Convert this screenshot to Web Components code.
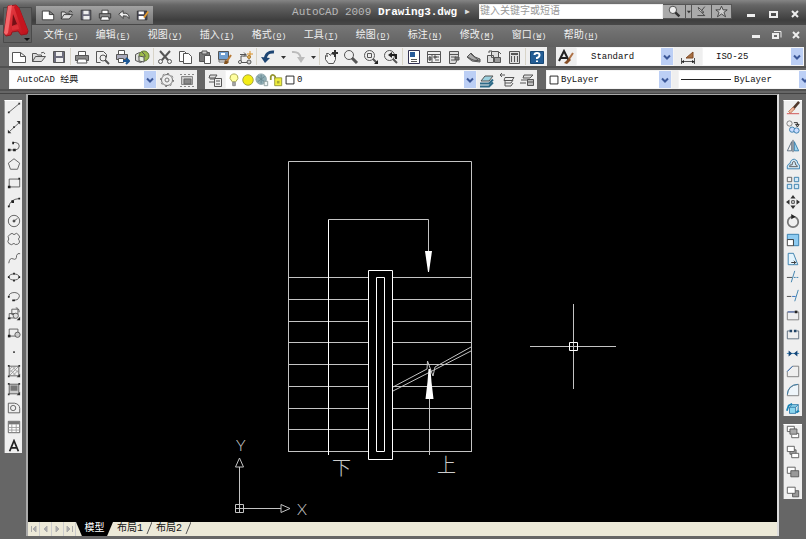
<!DOCTYPE html>
<html lang="zh-CN">
<head>
<meta charset="utf-8">
<title>AutoCAD 2009 Drawing3.dwg</title>
<style>
    html, body {
        margin: 0;
        height: 100%;
        background: #666;
        overflow: hidden;
    }
</style>
</head>
<body>
<cad-app></cad-app>

<script>
// 16x16 icons, drawn with the current colour unless they set their own
const ICONS = {
    new: '<path d="M1.500 3.500h8l5 4v6h-13z M9.500 3.500v4h5" fill="#fff"/>',
    open: '<path d="M1.500 12.500v-8h4l1 1.500h4v2 M1.500 12.500l3-5h10l-4 5z" fill="#ddd"/><path d="M10 4q3-2 4 1"/>',
    save: '<path d="M2.500 2.500h11v11h-11z" fill="#6c6c7c"/><path d="M5 3h6v4h-6z M5 9h7v4h-7z" fill="#eee" stroke="none"/>',
    print: '<path d="M4.500 6.500v-4h7v4" fill="#fff"/><path d="M1.500 6.500h13v5h-13z" fill="#888"/><path d="M4 10h8l1 4h-10z" fill="#fff"/>',
    undoS: '<path d="M2 7l5-4v3q7-1 7 6q-3-4-7-3v3z" fill="#eee"/>',
    saveAs: '<path d="M1.500 3.500h11v10h-11z" fill="#445"/><path d="M3 9h7v4h-7z M3 4h6v3h-6z" fill="#fff" stroke="none"/><path d="M14 4l-5 7" stroke="#e0982c" stroke-width="2"/>',
    preview: '<path d="M2.500 13.500v-11h7l3 3v3 M2.500 13.500h4" fill="none"/><circle cx="9" cy="9" r="3"/><path d="M11 11l4 4" stroke-width="2"/>',
    plot: '<path d="M4.500 5.500v-4h6v4" fill="#fff"/><path d="M2.500 5.500h11v5h-11z" fill="#aab"/><path d="M4.500 9.500h5v4h-5z" fill="#fff"/><path d="M9 12h5m-2-3l3 3l-3 3" stroke="#1a5593" stroke-width="2"/>',
    publish: '<path d="M1.500 5.500l4-2l5 2v6l-4 2l-5-2z" fill="#ddd"/><circle cx="10" cy="7" r="5" fill="#9cb94a" stroke="#627a35"/><path d="M5 7l5 1v5l-5-1z" fill="#e6eedc"/><path d="M8 3q4 3 3 5"/>',
    cut: '<path d="M3 2l8 9M13 2l-8 9" stroke-width="2"/><circle cx="3.500" cy="12.500" r="2"/><circle cx="12.500" cy="12.500" r="2"/>',
    copy: '<path d="M2.500 2.500h5l2 2v8h-7z" fill="#fff"/><path d="M6.500 4.500h5l3 3v7h-8z" fill="#fff"/>',
    paste: '<path d="M2.500 3.500h10v9h-10z" fill="#777"/><path d="M5 2h5v3h-5z" fill="#ccc"/><path d="M7.500 6.500h6v8h-6z" fill="#fff"/>',
    match: '<path d="M1.500 2.500h10v8h-10z" fill="#6f9ed0"/><path d="M2 11h9v2h-9z" fill="#fff" stroke="#777"/><path d="M4 5h4" stroke="#fff" stroke-width="2"/><path d="M14 6l-4 6" stroke="#b87935" stroke-width="2"/><path d="M8 11l4 2l-2 2h-3z" fill="#85531e" stroke="none"/>',
    block: '<path d="M4 13V7h6" /><path d="M3 5.500h6l-2-2m2 2l-2 2"/><path d="M2 13.500h9"/><circle cx="3" cy="13" r="1.500" fill="#fff"/><circle cx="12" cy="13" r="2" fill="#ccc"/><path d="M13 2v6M10 5h6" stroke="#d99026"/><circle cx="12" cy="8" r="1.500" fill="#e5b45e" stroke="#a8782c"/>',
    undo: '<path d="M14 3Q6 2 5 11" stroke="#1d4573" stroke-width="3"/><path d="M1 8l4 6l5-5z" fill="#1d4573" stroke="none"/>',
    redo: '<path d="M2 3q8-1 9 7" stroke="#bbb" stroke-width="2"/><path d="M7 8l4 6l4-6z" fill="#bbb" stroke="none"/>',
    pan: '<path d="M2.500 6.500l2 1l-1-3h2l2 2l1-2l4 2v4l-2 4h-5l-3-4z" fill="#f4f4f4"/><path d="M12 1v7M9 4h6" stroke="#333" stroke-width="2"/>',
    zoom: '<circle cx="6" cy="6" r="4.500" fill="#eee"/><path d="M9 9l5 5" stroke-width="3"/>',
    zoomWin: '<circle cx="6.500" cy="6.500" r="5" fill="#eee"/><path d="M4.500 4.500h4v4h-4z"/><path d="M10 10l4 4" stroke-width="2"/><path d="M11 15h4v-4z" fill="#222" stroke="none"/>',
    zoomPrev: '<circle cx="6.500" cy="6.500" r="5" fill="#eee"/><path d="M10 10l4 4" stroke-width="2"/><path d="M13 10V6H8" stroke="#222" stroke-width="2"/><path d="M9 3v6l-4-3z" fill="#222" stroke="none"/>',
    props: '<path d="M2.500 1.500h11v13h-11z" fill="#fff" stroke="#335"/><path d="M4 3h5v5h-5z" fill="#285b9b" stroke="none"/><path d="M5 10.500h6M5 12.500h6"/>',
    design: '<path d="M1.500 2.500h13v11h-13z M1.500 5.500h13M6 6v7M9 8h4M9 11h4M3 8h1M3 11h1"/><path d="M3 8h2v3h-2z M8 7h2v2h-2z" fill="#888"/>',
    palette: '<path d="M3.500 2.500h9v5l-3 7h-6z M3.500 5.500h9M5 8h5M5 11h4" fill="#ddd"/><path d="M9 8h4v3h-4z" fill="#777"/>',
    sheet: '<path d="M1 8l4-4l4 4l5 2v3l-8-1z" fill="#aaa"/><path d="M2 8q6 5 12 3M5 5l7 6"/>',
    markup: '<path d="M5.500 2.500h7v6h-7z M1.500 6.500h6v7h-6z" fill="#ddd"/><path d="M8.500 8.500h6v5h-6z" fill="#999"/><path d="M3 4v-2h3M13 3l2 2"/>',
    calc: '<path d="M3.500 2.500h10v12h-10z" fill="#ddd"/><path d="M5 5h7M5 8h1m2 0h1m2 0h1M5 10h1m2 0h1m2 0h1M5 12h1m2 0h1m2 0h1" stroke-width="2"/>',
    help: '<path d="M1.500 2.500h13v12h-13z" fill="#235d95" stroke="#174775"/><path d="M5.500 6q0-2 2.500-2t2.500 2t-2.500 3v1M8 11.500v1.500" stroke="#fff" stroke-width="2"/>',
    textStyle: '<path d="M1 12L6 2L11 12M3 9h6" stroke="#222" stroke-width="2"/><path d="M15 4l-4 6" stroke="#ae7145" stroke-width="2"/><path d="M11 9l2 2l-4 4l-3-1z" fill="#854d25" stroke="none"/>',
    dimStyle: '<path d="M1.500 9v6M14.500 9v6M2 12.500h12"/><path d="M1 13l3-2v3z M15 13l-3-2v3z" fill="#222" stroke="none"/><path d="M13 3l-7 6h7z" fill="#a87042" stroke="#804b25"/>',
    gear: '<circle cx="8" cy="8" r="5.500" stroke="#777"/><circle cx="8" cy="8" r="6.500" stroke="#777" stroke-dasharray="2 3"/><circle cx="8" cy="8" r="2" stroke="#777"/>',
    saveWs: '<path d="M2.500 4.500h11v8h-11z" stroke="#888" fill="#ccc"/><path d="M5 7h7v5h-7z" fill="#888" stroke="#666"/><path d="M1 2.500h14M1 14.500h14" stroke="#888" stroke-dasharray="2 2"/>',
    layers: '<path d="M3 3h7l-2 3h-6z M3 7h5M2 10h5" fill="#ddd"/><path d="M7.500 6.500h7v8h-7z" fill="#eee"/><path d="M9 9h4M9 12h4"/>',
    bulb: '<path d="M6 10q-4-4-2-7q4-4 8 0q2 3-2 7z" fill="#ffffa0" stroke="#a0a044"/><path d="M6.500 10.500h3v4h-3z" fill="#aaa" stroke="#888"/>',
    sun: '<circle cx="8" cy="8" r="6" fill="#f4ed16" stroke="#999a3e"/>',
    freeze: '<circle cx="7" cy="7" r="6" fill="#8faeb5" stroke="#8aa3aa"/><path d="M3 4l8 6M7 2v10M3 10l8-6" stroke="#66858f"/><path d="M10.500 9.500h4v5h-4z" fill="#edf4f4" stroke="#899"/>',
    lock: '<path d="M2 8V4q2-4 5 0v3" stroke="#93932f" stroke-width="2"/><path d="M6.500 5.500h8v9h-8z" fill="#f0ef3d" stroke="#8f9034"/><path d="M9 9h3v3h-3z" fill="#aaa932" stroke="none"/>',
    square: '<path d="M3.500 3.500h9v9h-9z" fill="#fff" stroke="#111"/>',
    layerCur: '<path d="M2 9h8l4-5h-8z" fill="#9cd1df"/><path d="M1 11.500h9l4-4M1 14.500h9l4-4" stroke="#2d6a87" stroke-width="2"/>',
    layerPrev: '<path d="M6 5.500h9l-2 3h-8z M6 8v3h6l2-3 M6 11v3h6l2-3" fill="#eee"/><path d="M1 3h5m-5 0l2-2m-2 2l2 2"/>',
    layerState: '<path d="M5 3h9l-3 3h-7z M2 8h8M1 11h6" fill="#ddd"/><path d="M8.500 7.500h6v6h-6z" fill="#bbb"/><path d="M9 10h5"/>',
    line: '<path d="M2 13L14 3"/><path d="M1 12h2v2h-2z M13 2h2v2h-2z" fill="#333" stroke="none"/>',
    xline: '<path d="M3 13L14 3"/><path d="M1 15v-4l4 4z M15 1v4l-4-4z M7 7h2v2h-2z" fill="#333" stroke="none"/>',
    pline: '<path d="M2 12.500h8q4-1 4-4.500t-4-4h-3" stroke="#555"/><path d="M1 11h3v3h-3z M7 11h3v3h-3z M6 3h2v3h-2z" fill="#222" stroke="none"/>',
    polygon: '<path d="M8 2l6.500 5l-2.500 7h-8l-2.500-7z"/>',
    rect: '<path d="M2.500 3.500h12v9h-12z"/><path d="M1 11h3v3h-3z M13 2h2v2h-2z" fill="#222" stroke="none"/>',
    arc: '<path d="M2 14q1-9 12-10"/><path d="M1 12h2v2h-2z M5 6h3v3h-3z M13 3h2v2h-2z" fill="#222" stroke="none"/>',
    circle: '<circle cx="8" cy="8" r="6.500"/><path d="M8 8l4-3"/><path d="M7 7h2v2h-2z" fill="#222"/>',
    cloud: '<path d="M3 3q3-3 5 0q3-3 5 0q3 3 0 5q3 4-1 6q-3 1-4-1q-3 3-6 0q-2-2 0-5q-2-3 1-5z"/>',
    spline: '<path d="M2 14q1-7 5-5t4-4q1-3 4-2"/>',
    ellipse: '<ellipse cx="8" cy="8" rx="6" ry="3.500"/><path d="M7 3h2v2h-2z M1 7h2v2h-2z M13 7h2v2h-2z M7 11h2v2h-2z" fill="#222" stroke="none"/>',
    earc: '<path d="M2 9q0-5 7-5q6 1 5 5t-6 4"/><path d="M6 12h3v2h-3z M1 8h2v2h-2z" fill="#222" stroke="none"/>',
    insert: '<path d="M5.500 2.500h7v6h-7z M2.500 7.500h7v5h-7z"/><circle cx="10" cy="10" r="3" fill="#ddd"/><path d="M10 1q4 0 4 5"/><path d="M15 11v4h-4z M1 12h3v2h-3z" fill="#222" stroke="none"/>',
    mkblock: '<path d="M2.500 3.500h10v8h-10z"/><circle cx="12" cy="10" r="3" fill="#ccc"/><path d="M1 10h3v3h-3z" fill="#222" stroke="none"/>',
    point: '<path d="M7 7h2v2h-2z" fill="#444" stroke="none"/>',
    hatch: '<path d="M2.500 2.500h11v11h-11z"/><path d="M3 6l3-3M3 10l7-7M3 13L13 3M7 13l6-6M3 6l7 7M6 3l7 7" stroke="#999"/><path d="M1 1h2v2h-2z M13 1h2v2h-2z M1 13h2v2h-2z M11 15h4v-4z" fill="#333" stroke="none"/>',
    gradient: '<path d="M2.500 2.500h11v11h-11z" fill="#ccc"/><path d="M4 4h8v6h-8z" fill="#777" stroke="none"/><path d="M1 1h2v2h-2z M13 1h2v2h-2z M1 13h2v2h-2z M11 15h4v-4z" fill="#333" stroke="none"/>',
    region: '<path d="M1.500 13.500v-11h7q6 1 6 6v5z"/><circle cx="7" cy="8" r="3"/>',
    table: '<path d="M1.500 1.500h13v13h-13z" fill="#fff"/><path d="M1.500 8.500h13M1.500 11.500h13M5.500 5v9M10.500 5v9" stroke="#999"/><path d="M2 2h12v3h-12z" fill="#777" stroke="none"/>',
    mtext: '<path d="M3 14L8 2L13 14M5 10h6" stroke="#222" stroke-width="2"/>',
    erase: '<path d="M15 1l-7 8" stroke="#50382b" stroke-width="3"/><path d="M8 7l-5 5l2 2l5-5z" fill="#efb9a0" stroke="#b66b4c"/><path d="M1 14.500h14" stroke="#c44"/>',
    copyObj: '<circle cx="4" cy="4" r="3" stroke="#777"/><circle cx="7" cy="11" r="3" fill="#cdf"/><circle cx="12" cy="12" r="3" fill="#cdf"/><path d="M9 3h4v3m-2-1l2 3l2-3z" stroke="#222"/>',
    mirror: '<path d="M6.500 3v10.500h-5z" stroke="#567"/><path d="M9.500 3v10.500h5z" fill="#9ed5ef"/><path d="M8 1v14" stroke="#345"/>',
    offset: '<path d="M1.500 13.500v-3q1-3 3-3q1-5 5-5q4 1 4 5q2 1 2 3v3z" fill="#d3e8f5"/><path d="M4 11h9q0-2-2-2q0-4-2-4t-2 4q-3-1-3 2z" stroke="#555"/>',
    array: '<path d="M1.500 1.500h5v5h-5z" stroke="#555"/><path d="M9.500 1.500h5v5h-5z M1.500 9.500h5v5h-5z M9.500 9.500h5v5h-5z" fill="#d3e8f5"/>',
    move: '<path d="M8 0l3 4h-6z M8 16l3-4h-6z M0 8l4-3v6z M16 8l-4-3v6z" fill="#333" stroke="none"/><path d="M6.500 6.500h3v3h-3z" stroke="#333"/>',
    rotate: '<circle cx="8" cy="9" r="6" stroke="#777" stroke-width="2"/><path d="M6 0l5 3l-5 3z" fill="#222" stroke="none"/>',
    scale: '<path d="M1.500 1.500h13v13h-6v-7h-7z" fill="#8ecbf1"/><path d="M1.500 7.500h7v7h-7z" fill="#fff" stroke="#333"/>',
    stretch: '<path d="M2.500 1.500h6l5 13h-11z" fill="#e4f3fc"/><path d="M6 12h5m-2-2l2 2l-2 2" stroke="#222"/>',
    trim: '<path d="M10 1l-4 13"/><path d="M1 8.500h6" stroke="#444"/><path d="M9 8.500h6" stroke-dasharray="2 1"/>',
    extend: '<path d="M14 1l-4 13"/><path d="M1 8.500h5" stroke="#444"/><path d="M7 8.500h4" stroke="#26b"/>',
    breakPt: '<path d="M1.500 13.500v-9h13v9z" stroke="#777"/><path d="M2 4.500h8" stroke="#35a"/><path d="M10 3h3v3h-3z" fill="#222" stroke="none"/>',
    break: '<path d="M4 4.500h-2.500v9h13v-9h-2.500" stroke="#567"/><path d="M4 3h3v3h-3z M9 3h3v3h-3z" fill="#246" stroke="none"/>',
    join: '<path d="M1 8.500h14"/><path d="M3 5l4 3.500l-4 3.500z M13 5l-4 3.500l4 3.500z" fill="#147" stroke="none"/>',
    chamfer: '<path d="M1.500 14.500v-6l6-6h7v12z" stroke="#777"/><path d="M1.500 8.500l6-6" stroke="#26b"/>',
    fillet: '<path d="M1.500 14.500q0-12 13-13v13z" fill="#eef5fa" stroke="#777"/><path d="M1.500 13q1-11 12-11.500"/>',
    explode: '<path d="M4 6h7v7h-7z M4 6l3-3h7l-3 3M14 3v6l-3 4" fill="#8bd5ee"/><path d="M1 10l2-6l4-2M12 12l3-2" stroke-width="2" stroke="#1582b4"/>',
    front: '<path d="M1.500 1.500h8v6h-8z" fill="#fff"/><path d="M8.500 9.500h6v5h-8v-3" fill="#fff"/><path d="M4.500 4.500h8v6h-8z" fill="#aaa"/>',
    back: '<path d="M4.500 5.500h7v5h-7z" fill="#aaa"/><path d="M1.500 1.500h8v6h-8z M6.500 9.500h8v5h-8z" fill="#fff"/>',
    above: '<path d="M1.500 2.500h9v7h-9z" fill="#fff"/><path d="M5.500 6.500h9v7h-9z" fill="#999"/>',
    under: '<path d="M7.500 6.500h7v7h-7z" fill="#999"/><path d="M1.500 2.500h9v7h-9z" fill="#fff"/>',
    sat: '<path d="M4 3q1 6 7 6z" fill="#eee"/><path d="M8 7l4-5M3 13h9l-4-4"/>',
    star: '<path d="M8 1.500l2 4.500h5l-4 3l2 5.500l-5-3.500l-5 3.500l2-5.500l-4-3h5z" fill="#ccc"/>',
    min: '<path d="M4 8h8v3h-8z" fill="#eee" stroke="none"/>',
    max: '<path d="M5 6h7v5h-7z" stroke="#eee" stroke-width="2"/>',
    restore: '<path d="M6 4.500h7v6" stroke="#eee"/><path d="M5 7h5v4h-5z" stroke="#eee" stroke-width="2"/>',
    close: '<path d="M5 5l6 6M11 5l-6 6" stroke="#eee" stroke-width="2"/>',
    more: '<path d="M6 7h5l-2.500 3z" fill="#333" stroke="none"/>'
}

class CadIcon extends HTMLElement {
    constructor(){
        super()
        this.attachShadow({ mode: "open" })
    }

    connectedCallback(){
        this.shadowRoot.innerHTML = `
        <style>
            :host { display: block; width: 16px; height: 16px; flex: none; }
            svg { display: block; width: 100%; height: 100%; fill: none; stroke: currentColor; }
        </style>
        <svg viewBox="0 0 16 16" aria-hidden="true">${ICONS[this.getAttribute("name")]}</svg>
        `
    }
}
customElements.define('cad-icon', CadIcon)


class CadTool extends HTMLElement {
    constructor(){
        super()
        this.attachShadow({ mode: "open" })
    }

    connectedCallback(){
        const name = this.getAttribute("icon")
        this.shadowRoot.innerHTML = `
        <style>
            :host { display: block; width: var(--tool-width, 20px); flex: none; }
            :host([narrow]) { width: 10px; }
            button {
                display: flex;
                align-items: center;
                justify-content: center;
                width: 100%;
                height: 100%;
                padding: 0;
                border: 0;
                background: none;
                color: inherit;
                overflow: hidden;
            }
            cad-icon { width: var(--icon-size, 16px); height: var(--icon-size, 16px); }
        </style>
        <button type="button" aria-label="${this.getAttribute("label") || name}"><cad-icon name="${name}"></cad-icon></button>
        `
    }
}
customElements.define('cad-tool', CadTool)


class ToolStrip extends HTMLElement {
    constructor(){
        super()
        this.attachShadow({ mode: "open" })
    }

    connectedCallback(){
        const groups = (this.getAttribute("tools") || "").split("|")
        const tools = groups.map(g => g.trim().split(" ").filter(Boolean)
            .map(n => `<cad-tool icon="${n}" ${n === "more" ? "narrow" : ""}></cad-tool>`).join(""))
        this.shadowRoot.innerHTML = `
        <style>
            :host {
                display: flex;
                flex: none;
                align-items: stretch;
                background: #efefef;
                color: #555;
            }
            :host([vertical]) {
                flex-direction: column;
                justify-content: space-between;
                align-items: center;
                border-top: 1px solid #fff;
                --icon-size: 14px;
            }
            i { width: 1px; margin: 1px; background: #d8d4c8; }
        </style>
        ${tools.join("<i></i>")}<slot></slot>
        `
    }
}
customElements.define('tool-strip', ToolStrip)


class CadCombo extends HTMLElement {
    constructor(){
        super()
        this.attachShadow({ mode: "open" })
    }

    connectedCallback(){
        this.shadowRoot.innerHTML = `
        <style>
            :host {
                display: flex;
                align-items: center;
                background: #fff;
                color: #111;
                font-size: 9px;
                min-width: 0;
                box-sizing: border-box;
                border: 1px solid #f4f4f4;
            }
            label { display: flex; flex: 1; align-self: stretch; min-width: 0; }
            select {
                appearance: none;
                flex: 1;
                min-width: 0;
                padding: 0 0 0 var(--indent, 4px);
                border: 0;
                background: none;
                color: inherit;
                font: inherit;
            }
            svg { flex: none; width: 12px; height: 100%; background: #bccff5; fill: none; stroke: #3c5899; stroke-width: 2; }
        </style>
        <slot></slot>
        <label>
            <select aria-label="${this.getAttribute("label")}"><option>${this.getAttribute("value")}</option></select>
            <svg viewBox="0 0 12 16" aria-hidden="true"><path d="M3 7l3 3l3-3"/></svg>
        </label>
        `
    }
}
customElements.define('cad-combo', CadCombo)


class TitleBar extends HTMLElement {
    constructor(){
        super()
        this.attachShadow({ mode: "open" })
    }

    connectedCallback(){
        this.shadowRoot.innerHTML = `
        <style>
            :host {
                display: flex;
                height: 25px;
                padding-left: 36px;
                background: linear-gradient(#858585, #666 20%, #3e3e3e 80%, #484848);
                color: #b8b8b8;
            }
            .quick {
                height: 18px;
                margin-top: 6px;
                padding-left: 2px;
                width: 115px;
                background: linear-gradient(#a2a2a2, #777);
                color: #333;
                --tool-width: 19px;
                --icon-size: 14px;
            }
            h1 {
                flex: 1;
                margin: 0 8px 0 0;
                font-size: 11px;
                line-height: 24px;
                font-weight: normal;
                text-align: right;
                white-space: pre;
            }
            b { color: #fff; }
            small { font-size: 12px; color: #ddd; }
            .search { display: flex; height: 15px; margin-top: 4px; }
            input {
                box-sizing: border-box;
                width: 184px;
                padding: 0;
                border: 1px solid #eee;
                background: #fff;
                font: inherit;
                font-size: 10px;
            }
            input::placeholder { color: #999; }
            .search cad-tool {
                box-sizing: border-box;
                border: 1px solid #555;
                border-left-width: 0;
                background: #aaa;
                color: #333;
                --icon-size: 13px;
            }
            .window { display: flex; margin: 4px 0 0 8px; height: 20px; --tool-width: 22px; }
        </style>
        <tool-strip class="quick" tools="new open save print undoS saveAs"></tool-strip>
        <h1>AutoCAD 2009 <b>Drawing3.dwg</b> <small>▸</small></h1>
        <div class="search">
            <input type="text" aria-label="搜索" placeholder="键入关键字或短语">
            <cad-tool icon="zoom" style="--tool-width: 23px" label="搜索"></cad-tool>
            <cad-tool icon="more" style="--tool-width: 6px" label="更多"></cad-tool>
            <cad-tool icon="sat" label="通讯中心"></cad-tool>
            <cad-tool icon="star" label="收藏夹"></cad-tool>
        </div>
        <div class="window">
            <cad-tool icon="min" label="最小化"></cad-tool>
            <cad-tool icon="max" label="最大化"></cad-tool>
            <cad-tool icon="close" label="关闭"></cad-tool>
        </div>
        `
    }
}
customElements.define('title-bar', TitleBar)


class MenuStrip extends HTMLElement {
    constructor(){
        super()
        this.attachShadow({ mode: "open" })
    }

    connectedCallback(){
        const items = [
            ["文件", "F"], ["编辑", "E"], ["视图", "V"], ["插入", "I"], ["格式", "O"], ["工具", "T"],
            ["绘图", "D"], ["标注", "N"], ["修改", "M"], ["窗口", "W"], ["帮助", "H"]
        ]
        this.shadowRoot.innerHTML = `
        <style>
            :host {
                display: flex;
                height: 22px;
                background: linear-gradient(#777, #606060);
                color: #f0f0f0;
            }
            nav { display: flex; flex: 1; padding-left: 35px; }
            button {
                width: 52px;
                padding: 0;
                border: 0;
                background: none;
                color: inherit;
                font: inherit;
                font-size: 10px;
                line-height: 18px;
                white-space: nowrap;
            }
            span { font-size: 8px; }
            .window { display: flex; height: 20px; --tool-width: 20px; }
        </style>
        <nav>${items.map(([t, k]) => `<button type="button">${t}<span>(<u>${k}</u>)</span></button>`).join("")}</nav>
        <div class="window">
            <cad-tool icon="min" label="最小化图形"></cad-tool>
            <cad-tool icon="restore" label="还原图形"></cad-tool>
            <cad-tool icon="close" label="关闭图形"></cad-tool>
        </div>
        `
    }
}
customElements.define('menu-strip', MenuStrip)


class AppButton extends HTMLElement {
    constructor(){
        super()
        this.attachShadow({ mode: "open" })
    }

    connectedCallback(){
        this.shadowRoot.innerHTML = `
        <style>
            :host { display: block; width: 32px; height: 44px; }
            button { width: 100%; height: 100%; padding: 0; border: 0; background: none; }
            svg { display: block; }
        </style>
        <button type="button" aria-label="菜单浏览器">
            <svg width="32" height="44" viewBox="0 0 32 44" aria-hidden="true">
                <defs>
                    <linearGradient id="red" x1="0" y1="0" x2="1" y2="1">
                        <stop offset="0" stop-color="#f0434a"/><stop offset="1" stop-color="#b80f18"/>
                    </linearGradient>
                </defs>
                <path d="M3.500 7.500h28v35h-28z" fill="#626262" stroke="#4a4a4a"/>
                <path d="M8 6l8-1l3 3l9 23l-1 3l-6 1l-3-4l-6 1l-1 3l-5 1l-2-3z" fill="url(#red)" stroke="#9a141c"/>
                <path d="M13 14l4 10l-5 2z" fill="#741016"/>
                <path d="M12 26l6-1l1 4l-7 1z" fill="#dc3038"/>
                <path d="M8 6l4-1l-4 28l-2 2l-2-2z" fill="#f5676b"/>
                <path d="M16 5l3 3l9 23l-5 2l-9-26z" fill="#c5161f"/>
                <path d="M24 38h6l-3 3z" fill="#111"/>
            </svg>
        </button>
        `
    }
}
customElements.define('app-button', AppButton)


class DrawingView extends HTMLElement {
    constructor(){
        super()
        this.attachShadow({ mode: "open" })
    }

    connectedCallback(){
        // stair treads, one line on each side of the handrail
        const treads = [277, 299, 321, 342, 364, 386, 408, 429, 451]
            .map(y => `<path d="M288.500 ${y}.500H368.500M392.500 ${y}.500H471.500"/>`).join("")
        this.shadowRoot.innerHTML = `
        <style>
            :host { display: block; background: #000; overflow: hidden; }
            svg { display: block; width: 100%; height: 100%; }
            .lines { fill: none; stroke: #c4c4c4; }
            .solid { fill: #fff; stroke: none; }
            .bright { stroke: #fff; }
            .labels { font-family: Lato, "Noto Sans CJK SC", sans-serif; fill: #fff; font-weight: 300; opacity: .8; }
        </style>
        <svg role="img" aria-label="楼梯平面图">
            <g class="lines" transform="translate(-28 -95)">
                <path d="M288.500 452V161.500H471.500V452"/>
                ${treads}
                <path class="bright" d="M368.500 270.500H392.500V459.500H368.500Z"/>
                <path class="bright" d="M376.500 277.500H384.500V451.500H376.500Z"/>
                <path class="bright" d="M328.500 455V219.500"/>
                <path d="M328.500 219.500H428.500V252"/>
                <path class="solid" d="M425 251h7l-2 14l-1 7h-1l-1-7z"/>
                <path d="M393 387L427 369L427.500 361L433 376L435 367L471 347M393 391L471 351"/>
                <path d="M429.500 455V370"/>
                <path class="solid" d="M425.500 399l2-17l1-13h2l1 13l2 17z"/>

                <path d="M530 346.500H616M573.500 304V389"/>
                <path class="bright" d="M569.500 342.500h8v8h-8z"/>

                <path d="M235.500 504.500h8v8h-8zM239.500 512V467M236 508.500H281"/>
                <path d="M239.500 458l-4 9h8zM290 508.500l-9-4v8z"/>
            </g>
            <g class="labels" transform="translate(-28 -95)">
                <text x="236" y="451" font-size="16">Y</text>
                <text x="297" y="515" font-size="16">X</text>
                <text x="332" y="475" font-size="19">下</text>
                <text x="437" y="472" font-size="19">上</text>
            </g>
        </svg>
        `
    }
}
customElements.define('drawing-view', DrawingView)


class LayoutTabs extends HTMLElement {
    constructor(){
        super()
        this.attachShadow({ mode: "open" })
    }

    connectedCallback(){
        this.shadowRoot.innerHTML = `
        <style>
            :host {
                display: flex;
                height: 14px;
                background: #ece9d8;
                color: #111;
                font-size: 10px;
            }
            button { padding: 0; border: 0; background: none; color: inherit; font: inherit; line-height: 14px; }
            .nav { width: 12px; border-right: 1px solid #ccc; }
            .nav svg { display: block; width: 11px; height: 14px; fill: #aaa; stroke: #aaa; }
            .tab { display: flex; justify-content: space-between; width: 39px; padding-left: 4px; }
            .active {
                justify-content: center;
                width: 37px;
                padding: 0;
                background: #000;
                color: #fff;
                clip-path: polygon(0 0, 100% 0, 84% 100%, 16% 100%);
            }
        </style>
        <button class="nav" type="button" aria-label="第一个"><svg><path d="M3.500 4v6M8 4v6L5 7z"/></svg></button>
        <button class="nav" type="button" aria-label="上一个"><svg><path d="M7 4v6L4 7z"/></svg></button>
        <button class="nav" type="button" aria-label="下一个"><svg><path d="M4 4v6l3-3z"/></svg></button>
        <button class="nav" type="button" aria-label="最后一个"><svg><path d="M3 4v6l3-3zM8.500 4v6"/></svg></button>
        <button class="tab active" type="button">模型</button>
        <button class="tab" type="button">布局1<svg width="6" height="14" stroke="#555"><path d="M6 0L1 12"/></svg></button>
        <button class="tab" type="button">布局2<svg width="6" height="14" stroke="#555"><path d="M6 0L1 12"/></svg></button>
        `
    }
}
customElements.define('layout-tabs', LayoutTabs)


class CadApp extends HTMLElement {
    constructor(){
        super()
        this.attachShadow({ mode: "open" })
    }

    getTemplate(){
        const template = document.createElement("template")
        template.innerHTML = `
        <header>
            <title-bar></title-bar>
            <menu-strip></menu-strip>
            <app-button></app-button>
        </header>
        <div class="row">
            <tool-strip class="standard" tools="new open save|print preview plot publish|cut copy paste match block|undo more redo more|pan zoom zoomWin zoomPrev|props design palette sheet markup calc|help"></tool-strip>
            <tool-strip class="styles" tools="textStyle">
                <cad-combo class="text-style" label="文字样式" value="Standard"></cad-combo>
                <cad-tool icon="dimStyle" class="dim"></cad-tool>
                <cad-combo class="dim-style" label="标注样式" value="ISO-25"></cad-combo>
            </tool-strip>
        </div>
        <div class="row">
            <tool-strip class="workspace">
                <cad-combo label="工作空间" value="AutoCAD 经典"></cad-combo>
                <cad-tool icon="gear"></cad-tool>
                <cad-tool icon="saveWs"></cad-tool>
            </tool-strip>
            <tool-strip class="layer" tools="layers">
                <cad-combo label="图层" value="0">
                    <cad-icon name="bulb"></cad-icon>
                    <cad-icon name="sun"></cad-icon>
                    <cad-icon name="freeze"></cad-icon>
                    <cad-icon name="lock"></cad-icon>
                    <cad-icon name="square"></cad-icon>
                </cad-combo>
                <cad-tool icon="layerCur"></cad-tool>
                <cad-tool icon="layerPrev"></cad-tool>
                <cad-tool icon="layerState"></cad-tool>
            </tool-strip>
            <tool-strip class="object">
                <cad-combo class="color" label="颜色" value="ByLayer"><cad-icon name="square"></cad-icon></cad-combo>
                <cad-combo class="linetype" label="线型" value="ByLayer"><hr></cad-combo>
            </tool-strip>
        </div>
        <main>
            <aside>
                <tool-strip class="draw" vertical tools="line xline pline polygon rect arc circle cloud spline ellipse earc insert mkblock point hatch gradient region table mtext"></tool-strip>
            </aside>
            <section>
                <drawing-view></drawing-view>
                <layout-tabs></layout-tabs>
            </section>
            <aside>
                <tool-strip class="modify" vertical tools="erase copyObj mirror offset array move rotate scale stretch trim extend breakPt break join chamfer fillet explode"></tool-strip>
                <tool-strip class="order" vertical tools="front back above under"></tool-strip>
            </aside>
        </main>
        ${this.getStyles()}
        `

        return template
    }

    getStyles(){
        return `
            <style>
                :host {
                    display: flex;
                    flex-direction: column;
                    height: 100vh;
                    font-family: "Liberation Mono", "Noto Sans CJK SC", monospace;
                    background: #666;
                }

                header {
                    position: relative;
                }

                app-button {
                    position: absolute;
                    left: 0;
                    top: 0;
                }

                .row {
                    display: flex;
                    height: 19px;
                    margin-bottom: 4px;
                    padding-left: 9px;
                    box-shadow: 0 2px 0 #515151;
                }

                .standard {
                    width: 538px;
                }

                .styles {
                    flex: 1;
                    margin: 0 2px 0 9px;
                }

                .text-style {
                    width: 98px;
                    --indent: 14px;
                }

                .dim {
                    --tool-width: 28px;
                }

                .dim-style {
                    flex: 1;
                    --indent: 13px;
                }

                .workspace cad-combo {
                    width: 148px;
                    --indent: 7px;
                }

                .layer {
                    margin-left: 8px;
                }

                .layer cad-combo {
                    width: 252px;
                    padding-left: 1px;
                    --indent: 0px;
                }

                .layer cad-icon, .color cad-icon {
                    width: 14px;
                    height: 14px;
                }

                .object {
                    flex: 1;
                    gap: 6px;
                    margin: 0 -6px 0 9px;
                }

                .color {
                    width: 126px;
                    --indent: 0px;
                }

                .linetype {
                    flex: 1;
                    --indent: 0px;
                }

                .linetype hr {
                    width: 50px;
                    height: 1px;
                    margin: 0 3px 0 2px;
                    border: 0;
                    background: #222;
                }

                main {
                    display: flex;
                    flex: 1;
                    min-height: 0;
                    border-top: 1px solid #444;
                    margin-bottom: 3px;
                }

                section {
                    display: flex;
                    flex-direction: column;
                    flex: 1;
                    min-width: 0;
                    border: solid #aaa;
                    border-width: 1px 2px 0 2px;
                    border-right-color: #ddd;
                }

                drawing-view {
                    flex: 1;
                    min-height: 0;
                }

                aside {
                    padding: 6px 4px 0;
                }

                .draw, .modify, .order {
                    border-left: 1px solid #999;
                    --tool-width: 18px;
                }

                .draw {
                    height: 352px;
                    --tool-width: 17px;
                }

                .modify {
                    height: 315px;
                    color: #2f78a8;
                }

                .order {
                    height: 74px;
                    margin-top: 8px;
                }
            </style>
        `
    }

    render(){
        this.shadowRoot.appendChild(this.getTemplate().content.cloneNode(true))
    }

    connectedCallback(){
        this.render()
    }
}
customElements.define('cad-app', CadApp)
</script>
</body>
</html>
